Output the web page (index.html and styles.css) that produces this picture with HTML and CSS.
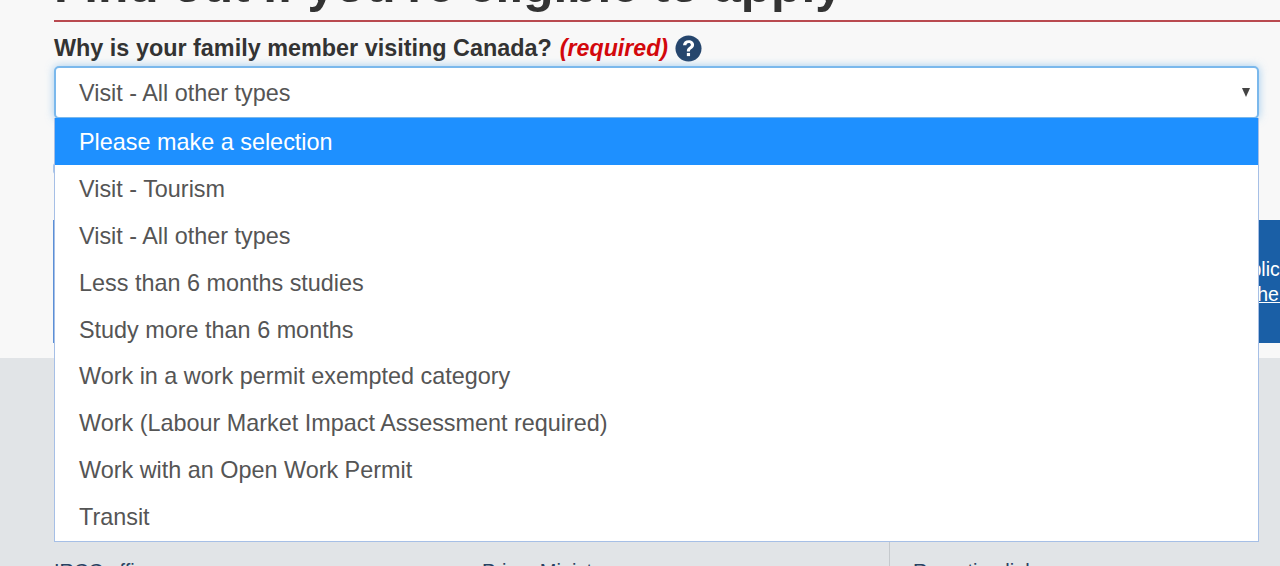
FILE: index.html
```html
<!DOCTYPE html>
<html lang="en">
<head>
<meta charset="utf-8">
<title>Find out if you're eligible to apply</title>
<link rel="stylesheet" href="styles.css">
</head>
<body>
<main class="main">
  <h1 class="title">Find out if you're eligible to apply</h1>
  <form class="form">
    <div class="label-row">
      <label class="label">Why is your family member visiting Canada? <em class="required">(required)</em></label>
      <svg class="help" viewBox="0 0 28 28" aria-hidden="true">
        <circle cx="14" cy="14" r="13.5" fill="#26466d"/>
        <path d="M8.300 10.600c.2-3.300 2.500-5.200 5.900-5.200 3.200 0 5.600 1.900 5.600 4.700 0 2.200-1.200 3.300-2.800 4.400-1.200.8-1.500 1.300-1.500 2.600h-3.200c-.1-2.300.6-3.400 2.200-4.500 1.200-.8 1.900-1.400 1.900-2.400 0-1.100-.9-1.800-2.100-1.800-1.400 0-2.300.8-2.500 2.300z" fill="#fff"/>
        <rect x="12.300" y="18.600" width="3.300" height="3.300" fill="#fff"/>
      </svg>
    </div>
    <div class="select-wrap">
      <div class="select">
        <span>Visit - All other types</span>
        <span class="caret"></span>
      </div>
      <ul class="options">
        <li class="option active">Please make a selection</li>
        <li class="option">Visit - Tourism</li>
        <li class="option">Visit - All other types</li>
        <li class="option">Less than 6 months studies</li>
        <li class="option">Study more than 6 months</li>
        <li class="option">Work in a work permit exempted category</li>
        <li class="option">Work (Labour Market Impact Assessment required)</li>
        <li class="option">Work with an Open Work Permit</li>
        <li class="option">Transit</li>
      </ul>
    </div>
    <div class="next-btn"></div>
    <div class="notice">
      <p class="notice-line">Before you submit your application</p>
      <p class="notice-line notice-line-link"><a class="notice-link" href="#">See the guide</a></p>
    </div>
  </form>
</main>
<footer class="footer">
  <div class="footer-col">IRCC offices</div>
  <div class="footer-col">Prime Minister</div>
  <div class="footer-col footer-col-last">Reporting links</div>
</footer>
</body>
</html>
```
FILE: styles.css
```css
* { box-sizing: border-box; }
html, body { margin: 0; height: 566px; overflow: hidden; }
body { background: #f8f8f8; font-family: "Liberation Sans", Arial, sans-serif; color: #333; }
.main { display: flow-root; height: 358px; padding: 0 0 0 54px; }
.title {
  margin: -40px 0 0;
  height: 62px;
  border-bottom: 2px solid #b94a50;
  font-size: 49.600px;
  line-height: 51px;
  font-weight: 700;
  color: #333;
  width: 1226px;
  white-space: nowrap;
}
.form { width: 1205px; }
.label-row { display: flex; align-items: center; height: 28px; margin-top: 12px; gap: 7px; }
.label { font-size: 23.400px; font-weight: 700; line-height: 28px; color: #333; white-space: nowrap; }
.required { color: #d3080c; font-style: italic; font-weight: 700; font-size: 23.200px; margin-left: 1.500px; }
.help { width: 27px; height: 27px; flex: none; }
.select-wrap { position: relative; margin-top: 4px; }
.select {
  height: 53px;
  background: #fff;
  border: 2px solid #7ab8ec;
  border-radius: 5px;
  box-shadow: 0 0 8px rgba(102, 175, 233, .6);
  display: flex;
  align-items: center;
  justify-content: space-between;
  padding: 2px 7px 0 23px;
  font-size: 23.400px;
  color: #555;
}
.caret {
  width: 0; height: 0;
  border-left: 4.500px solid transparent;
  border-right: 4.500px solid transparent;
  border-top: 9px solid #444;
  margin-top: -2px;
}
.options {
  position: absolute;
  z-index: 2;
  left: 0; right: 0;
  top: 52px;
  margin: 0;
  padding: 0;
  list-style: none;
  height: 424px;
  background: #fff;
  border: 1px solid #a6bfe6;
  border-top: 0;
}
.option { height: 46.900px; padding: 0 0 0 24px; font-size: 23.400px; line-height: 49px; color: #555; }
.option.active { background: #1e90ff; color: #fff; }
.next-btn { height: 11px; width: 40px; margin-top: 44px; background: #a9c6ea; border-radius: 3px; margin-left: -1px; }
.notice {
  margin-top: 46px;
  margin-left: -1px;
  width: 1269px;
  height: 123px;
  background: #1a5fa6;
  border-left: 2px solid #5b8fd6;
  color: #fff;
  font-size: 19.500px;
  line-height: 25px;
  padding-top: 37px;
  text-align: right;
  white-space: nowrap;
}
.notice-line { margin: 0; }
.notice-line-link { margin-right: -10px; }
.notice-link { color: #fff; }
.footer {
  height: 208px;
  background: #e1e4e7;
  padding: 201px 0 0 54px;
  display: grid;
  grid-template-columns: 428px 407px 1fr;
  font-size: 20px;
  line-height: 24px;
  color: #284162;
}
.footer-col { white-space: nowrap; }
.footer-col-last { border-left: 1px solid #c5c9cd; padding-left: 23px; margin-top: -20px; padding-top: 20px; }
```
